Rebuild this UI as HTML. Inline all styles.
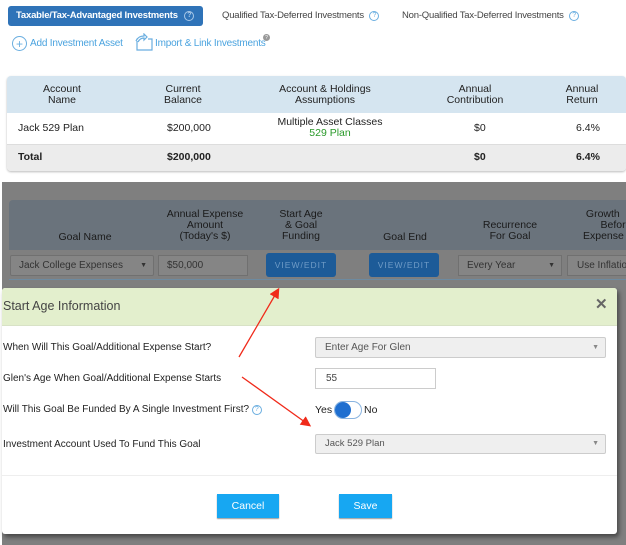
<!DOCTYPE html>
<html><head><meta charset="utf-8"><style>
*{box-sizing:border-box;margin:0;padding:0}
body{width:626px;height:545px;position:relative;overflow:hidden;background:#fff;font-family:"Liberation Sans",Arial,sans-serif;font-size:10.5px;color:#222}
.a{position:absolute;white-space:nowrap}
.c{text-align:center}
.q{display:inline-block;width:10px;height:10px;border:1px solid #6aaee0;border-radius:50%;font-size:7px;line-height:8px;text-align:center;color:#6aaee0;vertical-align:top;margin-top:1px}
.b{display:flex;align-items:center;justify-content:center}
</style></head><body>
<div class="a" style="left:8px;top:6px;width:195px;height:20px;background:#2f73b8;border-radius:3px;color:#fff;font-weight:bold;font-size:9.5px;letter-spacing:-0.2px;line-height:20px;padding-left:8px">Taxable/Tax-Advantaged Investments <span class="q" style="border-color:#a9c8e8;color:#a9c8e8;margin-left:4px;margin-top:5px">?</span></div>
<div class="a" style="left:222px;top:10px;font-size:9.5px;letter-spacing:-0.2px;color:#444;line-height:12px">Qualified Tax-Deferred Investments <span class="q" style="margin-left:3px">?</span></div>
<div class="a" style="left:402px;top:10px;font-size:9.5px;letter-spacing:-0.2px;color:#444;line-height:12px">Non-Qualified Tax-Deferred Investments <span class="q" style="margin-left:3px">?</span></div>
<div class="a b" style="left:12px;top:36px;width:15px;height:15px;border:1px solid #6aaee0;border-radius:50%;color:#6aaee0;font-size:12px">+</div>
<div class="a" style="left:30px;top:38px;font-size:10px;letter-spacing:-0.2px;color:#4aa3df">Add Investment Asset</div>
<svg class="a" style="left:134px;top:33px" width="20" height="18"><path d="M3 8 L3 17 L18 17 L18 6 L14 6" fill="none" stroke="#6aaee0" stroke-width="1.2"/><path d="M2 8 Q4 3 10 3 L10 1 L13 4 L10 7 L10 5 Q6 5 4 9" fill="none" stroke="#6aaee0" stroke-width="1.2"/></svg>
<div class="a" style="left:155px;top:38px;font-size:10px;letter-spacing:-0.2px;color:#4aa3df">Import &amp; Link Investments</div>
<div class="a b" style="left:263px;top:34px;width:7px;height:7px;border-radius:50%;background:#999;color:#fff;font-size:5px">?</div>
<div class="a" style="left:7px;top:76px;width:619px;height:95px;border-radius:4px;overflow:hidden;box-shadow:0 1px 2px #bbb">
 <div style="height:37px;background:#d5e5f0"></div>
 <div style="height:32px;background:#fff;border-bottom:1px solid #ddd"></div>
 <div style="height:26px;background:#ececec"></div>
</div>
<div class="a c" style="left:32px;top:84px;width:60px;line-height:11px">Account<br>Name</div>
<div class="a c" style="left:153px;top:84px;width:60px;line-height:11px">Current<br>Balance</div>
<div class="a c" style="left:255px;top:84px;width:140px;line-height:11px">Account &amp; Holdings<br>Assumptions</div>
<div class="a c" style="left:435px;top:84px;width:80px;line-height:11px">Annual<br>Contribution</div>
<div class="a c" style="left:552px;top:84px;width:60px;line-height:11px">Annual<br>Return</div>
<div class="a" style="left:18px;top:122px">Jack 529 Plan</div>
<div class="a" style="left:167px;top:122px">$200,000</div>
<div class="a c" style="left:255px;top:117px;width:150px;line-height:11px">Multiple Asset Classes<br><span style="color:#2a9a2a">529 Plan</span></div>
<div class="a" style="left:474px;top:122px">$0</div>
<div class="a" style="left:576px;top:122px">6.4%</div>
<div class="a" style="left:18px;top:151px;font-weight:bold">Total</div>
<div class="a" style="left:167px;top:151px;font-weight:bold">$200,000</div>
<div class="a" style="left:474px;top:151px;font-weight:bold">$0</div>
<div class="a" style="left:576px;top:151px;font-weight:bold">6.4%</div>

<div class="a" style="left:2px;top:182px;width:624px;height:363px;background:#7f7f7f"></div>
<div class="a" style="left:9px;top:200px;width:617px;height:50px;background:#6a737c;border-radius:4px 0 0 0"></div>
<div class="a" style="left:9px;top:279px;width:617px;height:1px;background:#6d8aa0"></div>
<div class="a c" style="left:40px;top:231px;width:90px;color:#1a1a1a">Goal Name</div>
<div class="a c" style="left:150px;top:209px;width:110px;line-height:11px;color:#1a1a1a">Annual Expense<br>Amount<br>(Today's $)</div>
<div class="a c" style="left:265px;top:209px;width:72px;line-height:11px;color:#1a1a1a">Start Age<br>&amp; Goal<br>Funding</div>
<div class="a c" style="left:370px;top:231px;width:70px;color:#1a1a1a">Goal End</div>
<div class="a c" style="left:470px;top:220px;width:80px;line-height:11px;color:#1a1a1a">Recurrence<br>For Goal</div>
<div class="a" style="left:583px;top:209px;line-height:11px;color:#1a1a1a">&nbsp;Growth<br>&nbsp;&nbsp;&nbsp;&nbsp;&nbsp;&nbsp;Befor<br>Expense I</div>
<div class="a" style="left:10px;top:255px;width:144px;height:21px;background:#858585;border:1px solid #707070;border-radius:2px;color:#333;font-size:10px;line-height:19px;padding-left:8px">Jack College Expenses<span style="position:absolute;right:6px;font-size:7px">▼</span></div>
<div class="a" style="left:158px;top:255px;width:90px;height:21px;background:#858585;border:1px solid #707070;color:#333;font-size:10px;line-height:19px;padding-left:8px">$50,000</div>
<div class="a b" style="left:266px;top:253px;width:70px;height:24px;background:#1d5b98;border-radius:3px;color:#6f9bc6;font-size:8.5px;letter-spacing:1px">VIEW/EDIT</div>
<div class="a b" style="left:369px;top:253px;width:70px;height:24px;background:#1d5b98;border-radius:3px;color:#6f9bc6;font-size:8.5px;letter-spacing:1px">VIEW/EDIT</div>
<div class="a" style="left:458px;top:255px;width:104px;height:21px;background:#858585;border:1px solid #707070;color:#333;font-size:10px;line-height:19px;padding-left:8px">Every Year<span style="position:absolute;right:6px;font-size:7px">▼</span></div>
<div class="a" style="left:567px;top:255px;width:70px;height:21px;background:#858585;border:1px solid #707070;color:#333;font-size:10px;line-height:19px;padding-left:9px;overflow:hidden">Use Inflation</div>

<div class="a" style="left:2px;top:288px;width:615px;height:246px;background:#fff;border-radius:3px;box-shadow:2px 3px 5px rgba(0,0,0,.45);overflow:hidden">
 <div style="height:38px;background:#e3efcd;border-bottom:1px solid #d8e2c6"></div>
</div>
<div class="a" style="left:3px;top:299px;font-size:12.5px;color:#444">Start Age Information</div>
<div class="a" style="left:595px;top:295px;font-size:15px;font-weight:bold;color:#666">✕</div>
<div class="a" style="left:3px;top:342px;font-size:10px">When Will This Goal/Additional Expense Start?</div>
<div class="a" style="left:315px;top:337px;width:291px;height:21px;background:#efefef;border:1px solid #ccc;border-radius:2px;color:#555;font-size:10px;line-height:19px;padding-left:9px">Enter Age For Glen<span style="position:absolute;right:6px;font-size:7px;color:#888">▼</span></div>
<div class="a" style="left:3px;top:373px;font-size:10px">Glen's Age When Goal/Additional Expense Starts</div>
<div class="a" style="left:315px;top:368px;width:121px;height:21px;background:#fff;border:1px solid #ccc;color:#444;font-size:10px;line-height:19px;padding-left:10px">55</div>
<div class="a" style="left:3px;top:404px;font-size:10px;line-height:12px">Will This Goal Be Funded By A Single Investment First? <span class="q">?</span></div>
<div class="a" style="left:315px;top:404px;font-size:10.5px">Yes</div>
<div class="a" style="left:334px;top:401px;width:28px;height:18px;border:1px solid #8ab4e0;border-radius:9px;background:#fff"></div>
<div class="a" style="left:335px;top:402px;width:16px;height:16px;border-radius:50%;background:#1f6fd0"></div>
<div class="a" style="left:364px;top:404px;font-size:10.5px">No</div>
<div class="a" style="left:3px;top:439px;font-size:10px">Investment Account Used To Fund This Goal</div>
<div class="a" style="left:315px;top:434px;width:291px;height:20px;background:#efefef;border:1px solid #ccc;border-radius:2px;color:#555;font-size:9.5px;line-height:18px;padding-left:9px">Jack 529 Plan<span style="position:absolute;right:6px;font-size:7px;color:#888">▼</span></div>
<div class="a" style="left:2px;top:475px;width:615px;height:1px;background:#eee"></div>
<div class="a b" style="left:217px;top:494px;width:62px;height:24px;background:#17a7f2;color:#fff;font-size:10.5px;box-shadow:0 1px 1px #999">Cancel</div>
<div class="a b" style="left:339px;top:494px;width:53px;height:24px;background:#17a7f2;color:#fff;font-size:10.5px;box-shadow:0 1px 1px #999">Save</div>

<svg class="a" style="left:0;top:0" width="626" height="545">
<defs><marker id="m" markerWidth="8" markerHeight="8" refX="6" refY="4" orient="auto"><path d="M0 0 L8 4 L0 8Z" fill="#f02a1a"/></marker></defs>
<line x1="239" y1="357" x2="278" y2="290" stroke="#f02a1a" stroke-width="1.3" marker-end="url(#m)"/>
<line x1="242" y1="377" x2="309" y2="425" stroke="#f02a1a" stroke-width="1.3" marker-end="url(#m)"/>
</svg>
</body></html>
